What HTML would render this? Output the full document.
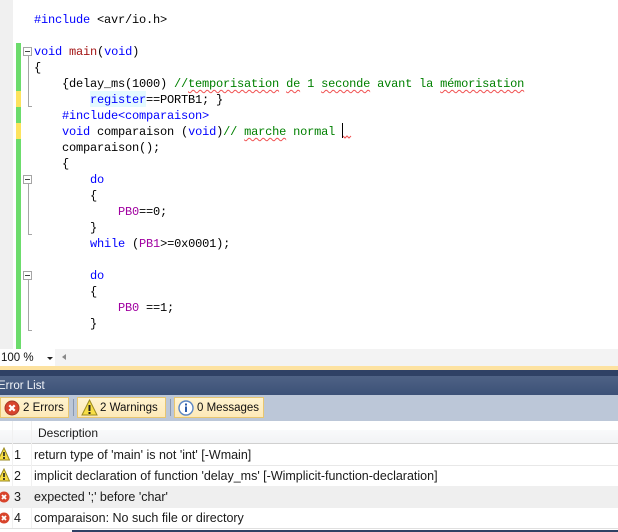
<!DOCTYPE html>
<html><head><meta charset="utf-8">
<style>
html,body{margin:0;padding:0;background:#fff}
#r{position:relative;width:618px;height:532px;overflow:hidden;background:#fff;font-family:"Liberation Sans",sans-serif}
.a{position:absolute}
.l{position:absolute;left:34px;height:16px;font:12px/18px "Liberation Mono",monospace;letter-spacing:-.2px;white-space:pre;color:#000}
.k{color:#00f}.g{color:#008000}.m{color:#a000a0}.f{color:#a31515}
.sq{text-decoration:underline wavy #f05050 1px;text-underline-offset:2px}
.box{position:absolute;left:23px;width:7px;height:7px;border:1px solid #a5a5a5;background:#fff}
.box:after{content:"";position:absolute;left:1px;top:3px;width:5px;height:1px;background:#444}
.v{position:absolute;left:28px;width:1px;background:#a5a5a5}
.h{position:absolute;left:28px;width:4px;height:1px;background:#a5a5a5}
.btn{position:absolute;top:397px;height:19px;border:1px solid #e8c670;background:linear-gradient(#fff3cf,#fde9b8);font-size:11.5px;line-height:20px;color:#111;white-space:pre}
.sep{position:absolute;top:399px;width:1px;height:17px;background:#8a99b0}
.t{position:absolute;font-size:12.5px;line-height:23px;color:#1a1a1a;white-space:pre;left:34px}
.n{position:absolute;font-size:12.5px;line-height:23px;color:#1a1a1a;left:14px}
</style></head><body><div id="r">
<div class="a" style="left:0;top:0;width:13px;height:349px;background:#f0f0f0"></div>
<div class="a" style="left:16px;top:43px;width:5px;height:306px;background:#6cdc6c"></div>
<div class="a" style="left:16px;top:91px;width:5px;height:16px;background:#fde35e"></div>
<div class="a" style="left:16px;top:123px;width:5px;height:16px;background:#fde35e"></div>
<div class="a" style="left:90px;top:91px;width:56px;height:16px;background:#e4faff"></div>

<div class="box" style="top:47px"></div><div class="v" style="top:56px;height:50px"></div><div class="h" style="top:106px"></div>
<div class="box" style="top:175px"></div><div class="v" style="top:184px;height:50px"></div><div class="h" style="top:234px"></div>
<div class="box" style="top:271px"></div><div class="v" style="top:280px;height:50px"></div><div class="h" style="top:330px"></div>

<div class="l k" style="top:11px">#include <span style="color:#000">&lt;avr/io.h&gt;</span></div>
<div class="l" style="top:43px"><span class="k">void</span> <span class="f">main</span>(<span class="k">void</span>)</div>
<div class="l" style="top:59px">{</div>
<div class="l" style="top:75px">    {delay_ms(1000) <span class="g">//<span class="sq">temporisation</span> <span class="sq">de</span> 1 <span class="sq">seconde</span> avant la <span class="sq">mémorisation</span></span></div>
<div class="l" style="top:91px">        <span class="k">register</span>==PORTB1; }</div>
<div class="l k" style="top:107px">    #include&lt;comparaison&gt;</div>
<div class="l" style="top:123px">    <span class="k">void</span> comparaison (<span class="k">void</span>)<span class="g">// <span class="sq">marche</span> normal</span></div>
<div class="a" style="left:342px;top:123px;width:1px;height:15px;background:#000"></div>
<svg class="a" style="left:343px;top:135px" width="9" height="4" viewBox="0 0 9 4"><path d="M0 1l2 2 2-2 2 2 2-2" fill="none" stroke="#f05050"/></svg>
<div class="l" style="top:139px">    comparaison();</div>
<div class="l" style="top:155px">    {</div>
<div class="l k" style="top:171px">        do</div>
<div class="l" style="top:187px">        {</div>
<div class="l" style="top:203px">            <span class="m">PB0</span>==0;</div>
<div class="l" style="top:219px">        }</div>
<div class="l" style="top:235px">        <span class="k">while</span> (<span class="m">PB1</span>&gt;=0x0001);</div>
<div class="l k" style="top:267px">        do</div>
<div class="l" style="top:283px">        {</div>
<div class="l" style="top:299px">            <span class="m">PB0</span> ==1;</div>
<div class="l" style="top:315px">        }</div>

<!-- scroll strip -->
<div class="a" style="left:0;top:349px;width:618px;height:17px;background:#f3f3f3"></div>
<div class="a" style="left:0;top:349px;width:55px;height:17px;background:#fff;font-size:11.5px;line-height:18px;color:#111;text-indent:1px">100 %</div>
<div class="a" style="left:47px;top:357px;width:0;height:0;border-left:3px solid transparent;border-right:3px solid transparent;border-top:3px solid #222"></div>
<div class="a" style="left:62px;top:354px;width:0;height:0;border-top:3px solid transparent;border-bottom:3px solid transparent;border-right:4px solid #8a8a8a"></div>

<div class="a" style="left:0;top:366px;width:618px;height:4px;background:#fde2a0"></div>
<div class="a" style="left:0;top:370px;width:618px;height:6px;background:#2f4165"></div>
<div class="a" style="left:0;top:376px;width:618px;height:19px;background:linear-gradient(#4f6285,#3c5177);color:#f2f4f8;font-size:11.5px;line-height:20px;text-indent:-2px">Error List</div>
<div class="a" style="left:0;top:395px;width:618px;height:26px;background:#bcc7d8"></div>

<div class="btn" style="left:0;width:67px"><span style="position:absolute;left:22px">2 Errors</span>
<svg class="a" style="left:3px;top:2px" width="16" height="16" viewBox="0 0 16 16"><circle cx="8" cy="8" r="7" fill="#d8442c" stroke="#a63a28"/><path d="M5.300 5.300l5.400 5.400M10.700 5.300l-5.400 5.400" stroke="#fff" stroke-width="2.200"/></svg></div>
<div class="sep" style="left:73px"></div>
<div class="btn" style="left:77px;width:87px"><span style="position:absolute;left:22px">2 Warnings</span>
<svg class="a" style="left:3px;top:1px" width="17" height="17" viewBox="0 0 17 17"><path d="M8.500 1L16 16H1z" fill="#f8de45" stroke="#9a8a20"/><path d="M8.500 6v6M8.500 13v2" stroke="#222" stroke-width="2"/></svg></div>
<div class="sep" style="left:170px"></div>
<div class="btn" style="left:174px;width:88px"><span style="position:absolute;left:22px">0 Messages</span>
<svg class="a" style="left:3px;top:2px" width="16" height="16" viewBox="0 0 16 16"><circle cx="8" cy="8" r="7" fill="#fff" stroke="#5b86c4" stroke-width="1.400"/><path d="M8 6.500v5.500M8 3.500v2" stroke="#2a5aa8" stroke-width="2"/></svg></div>

<!-- list header -->
<div class="a" style="left:0;top:430px;width:618px;height:13px;background:linear-gradient(#f9fafb,#f2f3f5)"></div>
<div class="a" style="left:0;top:443px;width:618px;height:1px;background:#d0d0d0"></div>
<div class="a" style="left:0;top:465px;width:618px;height:1px;background:#e8e8e8"></div>
<div class="a" style="left:0;top:486px;width:618px;height:22px;background:#efefef"></div>
<div class="a" style="left:0;top:528px;width:618px;height:1px;background:#e0e0e0"></div>
<div class="a" style="left:72px;top:530px;width:546px;height:2px;background:#2f4165"></div>
<div class="a" style="left:12px;top:421px;width:1px;height:107px;background:#f0f0f0"></div>
<div class="a" style="left:31px;top:421px;width:1px;height:107px;background:#f0f0f0"></div>
<div class="a" style="left:38px;top:424px;font-size:12px;line-height:18px;color:#1a1a1a">Description</div>

<svg class="a" style="left:0;top:447px" width="10" height="14" viewBox="0 0 10 14"><path d="M4 1L9.500 13H-2z" fill="#f8de45" stroke="#9a8a20"/><path d="M4 5v4M4 10v2" stroke="#222" stroke-width="1.600"/></svg>
<svg class="a" style="left:0;top:468px" width="10" height="14" viewBox="0 0 10 14"><path d="M4 1L9.500 13H-2z" fill="#f8de45" stroke="#9a8a20"/><path d="M4 5v4M4 10v2" stroke="#222" stroke-width="1.600"/></svg>
<svg class="a" style="left:0;top:490px" width="10" height="14" viewBox="0 0 10 14"><circle cx="4" cy="7" r="5.500" fill="#d8442c"/><path d="M2 5l4 4M6 5l-4 4" stroke="#fff" stroke-width="1.800"/></svg>
<svg class="a" style="left:0;top:511px" width="10" height="14" viewBox="0 0 10 14"><circle cx="4" cy="7" r="5.500" fill="#d8442c"/><path d="M2 5l4 4M6 5l-4 4" stroke="#fff" stroke-width="1.800"/></svg>

<div class="n" style="top:444px">1</div><div class="t" style="top:444px">return type of 'main' is not 'int' [-Wmain]</div>
<div class="n" style="top:465px">2</div><div class="t" style="top:465px">implicit declaration of function 'delay_ms' [-Wimplicit-function-declaration]</div>
<div class="n" style="top:486px">3</div><div class="t" style="top:486px">expected ';' before 'char'</div>
<div class="n" style="top:507px">4</div><div class="t" style="top:507px">comparaison: No such file or directory</div>
</div></body></html>
